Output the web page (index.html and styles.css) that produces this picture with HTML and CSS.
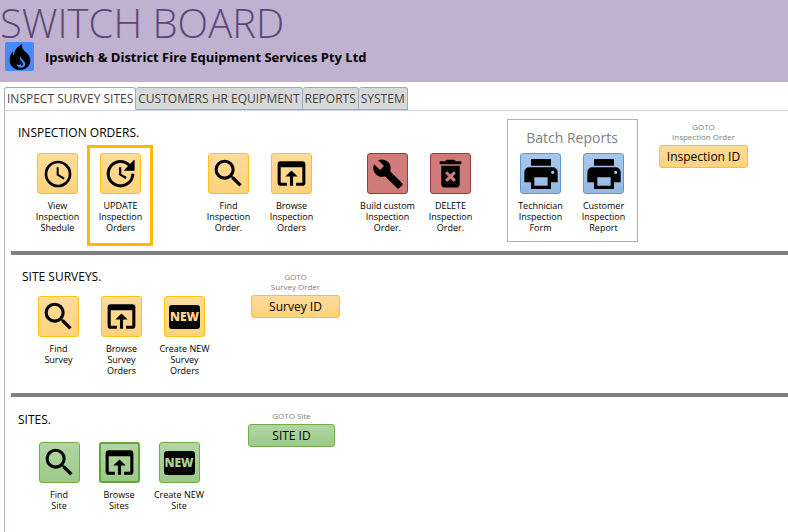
FILE: index.html
```html
<!DOCTYPE html>
<html lang="en">
<head>
<meta charset="utf-8">
<title>Switch Board</title>
<link rel="stylesheet" href="styles.css">
</head>
<body>
<svg class="sprite" aria-hidden="true">
  <symbol id="clock" viewBox="0 0 24 24"><path d="M12 2a10 10 0 1 0 0 20 10 10 0 0 0 0-20zm0 18a8 8 0 1 1 0-16 8 8 0 0 1 0 16zm.5-13H11v6l5.200 3.200.8-1.300-4.500-2.700z"/></symbol>
  <symbol id="update" viewBox="0 0 24 24"><path d="M21 10.120h-6.780l2.740-2.820c-2.730-2.700-7.150-2.800-9.880-.1-2.730 2.710-2.730 7.080 0 9.790s7.150 2.710 9.880 0C18.320 15.650 19 14.080 19 12.100h2c0 1.980-.88 4.550-2.640 6.290-3.510 3.480-9.210 3.480-12.720 0-3.500-3.470-3.530-9.110-.02-12.580s9.140-3.470 12.650 0L21 3v7.120zM12.500 8v4.250l3.500 2.080-.72 1.210L11 13V8h1.500z"/><path d="M21 3v7.120h-6.780z"/></symbol>
  <symbol id="search" viewBox="0 0 24 24"><path d="M15.500 14h-.79l-.28-.27A6.470 6.470 0 0 0 16 9.500 6.500 6.500 0 1 0 9.500 16c1.610 0 3.090-.59 4.230-1.570l.27.28v.79l5 4.990L20.490 19l-4.990-5zm-6 0a4.500 4.500 0 1 1 0-9 4.500 4.500 0 0 1 0 9z"/></symbol>
  <symbol id="browse" viewBox="0 0 24 24"><path d="M19 4H5a2 2 0 0 0-2 2v12a2 2 0 0 0 2 2h4v-2H5V8h14v10h-4v2h4a2 2 0 0 0 2-2V6a2 2 0 0 0-2-2zm-7 6-4 4h3v6h2v-6h3z"/></symbol>
  <symbol id="wrench" viewBox="0 0 24 24"><path d="M22.700 19l-9.100-9.100c.9-2.300.4-5-1.500-6.900-2-2-5-2.400-7.400-1.300L9 6 6 9 1.600 4.700C.4 7.100.9 10.100 2.900 12.100c1.900 1.900 4.600 2.400 6.900 1.500l9.100 9.100c.4.400 1 .4 1.400 0l2.300-2.300c.5-.4.5-1.100.1-1.400z"/></symbol>
  <symbol id="trash" viewBox="0 0 24 24"><path d="M6 19a2 2 0 0 0 2 2h8a2 2 0 0 0 2-2V7H6zm2.460-7.120 1.410-1.410L12 12.590l2.120-2.120 1.410 1.410L13.410 14l2.120 2.120-1.410 1.410L12 15.410l-2.120 2.120-1.410-1.410L10.590 14zM15.500 4l-1-1h-5l-1 1H5v2h14V4z"/></symbol>
  <symbol id="print" viewBox="0 0 24 24"><path d="M19 8H5a3 3 0 0 0-3 3v6h4v4h12v-4h4v-6a3 3 0 0 0-3-3zm-3 11H8v-5h8zm3-7a1 1 0 1 1 0-2 1 1 0 0 1 0 2zm-1-9H6v4h12z"/></symbol>
  <symbol id="flame" viewBox="0 0 78 78"><path d="M46 0C43 11 48 17 56 24c8 7 14 14 14 25 0 17-13 29-31 29S8 66 8 49c0-12 4-20 10-27-1 6 0 10 3 13C22 18 30 8 46 0z"/><path fill="#458bff" d="M41 35c-1 10 13 13 14 24 0 7-6 12-13 12-8 0-13-5-13-12 3 4 7 5 10 3 7-6-5-13 2-27z"/><path d="M41 44c0 7 7 10 7 16 0 4-3 6-7 6 4-7-3-12 0-22z"/></symbol>
</svg>

<header class="banner">
  <h1 class="banner-title">SWITCH BOARD</h1>
  <div class="company">
    <span class="logo"><svg class="logo-icon"><use href="#flame"/></svg></span>
    <p class="company-name">Ipswich &amp; District Fire Equipment Services Pty Ltd</p>
  </div>
</header>

<nav class="tabs" role="tablist">
  <button class="tab active" role="tab" aria-selected="true">INSPECT SURVEY SITES</button>
  <button class="tab" role="tab" aria-selected="false">CUSTOMERS HR EQUIPMENT</button>
  <button class="tab" role="tab" aria-selected="false">REPORTS</button>
  <button class="tab" role="tab" aria-selected="false">SYSTEM</button>
</nav>

<main class="panel">
  <section class="section orders">
    <div class="actions">
      <h2 class="heading">INSPECTION ORDERS.</h2>
      <div class="groups">
        <div class="tiles">
          <div class="tile"><button class="icon-btn amber" id="b1" aria-labelledby="l1"><svg class="icon"><use href="#clock"/></svg></button><label class="caption" id="l1" for="b1">View<br>Inspection<br>Shedule</label></div>
          <div class="tile marked"><button class="icon-btn amber" id="b2" aria-labelledby="l2"><svg class="icon large"><use href="#update"/></svg></button><label class="caption" id="l2" for="b2">UPDATE<br>Inspection<br>Orders</label></div>
        </div>
        <div class="tiles">
          <div class="tile"><button class="icon-btn amber" id="b3" aria-labelledby="l3"><svg class="icon large"><use href="#search"/></svg></button><label class="caption" id="l3" for="b3">Find<br>Inspection<br>Order.</label></div>
          <div class="tile"><button class="icon-btn amber" id="b4" aria-labelledby="l4"><svg class="icon large"><use href="#browse"/></svg></button><label class="caption" id="l4" for="b4">Browse<br>Inspection<br>Orders</label></div>
        </div>
        <div class="tiles edit">
          <div class="tile"><button class="icon-btn red" id="b5" aria-labelledby="l5"><svg class="icon"><use href="#wrench"/></svg></button><label class="caption" id="l5" for="b5">Build custom<br>Inspection<br>Order.</label></div>
          <div class="tile"><button class="icon-btn red" id="b6" aria-labelledby="l6"><svg class="icon large"><use href="#trash"/></svg></button><label class="caption" id="l6" for="b6">DELETE<br>Inspection<br>Order.</label></div>
        </div>
      </div>
    </div>
    <div class="batch">
      <h3 class="batch-title">Batch Reports</h3>
      <div class="tiles">
        <div class="tile"><button class="icon-btn blue" id="b7" aria-labelledby="l7"><svg class="icon huge"><use href="#print"/></svg></button><label class="caption" id="l7" for="b7">Technician<br>Inspection<br>Form</label></div>
        <div class="tile"><button class="icon-btn blue" id="b8" aria-labelledby="l8"><svg class="icon huge"><use href="#print"/></svg></button><label class="caption" id="l8" for="b8">Customer<br>Inspection<br>Report</label></div>
      </div>
    </div>
    <div class="goto">
      <label class="goto-label" for="g1">GOTO<br>Inspection Order</label>
      <button class="goto-btn amber" id="g1">Inspection ID</button>
    </div>
  </section>

  <section class="section surveys">
    <div class="actions">
      <h2 class="heading">SITE SURVEYS.</h2>
      <div class="tiles">
        <div class="tile"><button class="icon-btn amber" id="b9" aria-labelledby="l9"><svg class="icon large"><use href="#search"/></svg></button><label class="caption" id="l9" for="b9">Find<br>Survey</label></div>
        <div class="tile"><button class="icon-btn amber" id="b10" aria-labelledby="l10"><svg class="icon large"><use href="#browse"/></svg></button><label class="caption" id="l10" for="b10">Browse<br>Survey<br>Orders</label></div>
        <div class="tile"><button class="icon-btn amber" id="b11" aria-labelledby="l11"><span class="new">NEW</span></button><label class="caption" id="l11" for="b11">Create NEW<br>Survey<br>Orders</label></div>
      </div>
    </div>
    <div class="goto">
      <label class="goto-label" for="g2">GOTO<br>Survey Order</label>
      <button class="goto-btn amber" id="g2">Survey ID</button>
    </div>
  </section>

  <section class="section sites">
    <div class="actions">
      <h2 class="heading">SITES.</h2>
      <div class="tiles">
        <div class="tile"><button class="icon-btn green" id="b12" aria-labelledby="l12"><svg class="icon large"><use href="#search"/></svg></button><label class="caption" id="l12" for="b12">Find<br>Site</label></div>
        <div class="tile"><button class="icon-btn green selected" id="b13" aria-labelledby="l13"><svg class="icon large"><use href="#browse"/></svg></button><label class="caption" id="l13" for="b13">Browse<br>Sites</label></div>
        <div class="tile"><button class="icon-btn green" id="b14" aria-labelledby="l14"><span class="new">NEW</span></button><label class="caption" id="l14" for="b14">Create NEW<br>Site</label></div>
      </div>
    </div>
    <div class="goto">
      <label class="goto-label" for="g3">GOTO Site</label>
      <button class="goto-btn green" id="g3">SITE ID</button>
    </div>
  </section>
</main>
</body>
</html>
```
FILE: styles.css
```css
* { box-sizing: border-box; }

body {
  margin: 0;
  min-height: 100vh;
  display: flex;
  flex-direction: column;
  background: #fff;
  color: #000;
  font-family: "Open Sans", "Noto Sans", sans-serif;
}

button {
  font-family: inherit;
  padding: 0;
  color: #000;
  cursor: pointer;
}

h1, h2, h3, p { margin: 0; font-weight: 400; }

.sprite { display: none; }

.banner {
  height: 82px;
  background: #bfb1cf;
}

.banner-title {
  height: 42px;
  font-size: 40px;
  line-height: 45px;
  font-weight: 300;
  color: #5e4779;
  white-space: nowrap;
}

.company {
  display: flex;
  align-items: center;
  gap: 11px;
  padding-left: 5px;
}

.logo {
  display: flex;
  width: 29px;
  height: 29px;
  align-items: center;
  justify-content: center;
  border-radius: 2px;
  background: #458bff;
}

.logo-icon { width: 26px; height: 26px; }

.company-name {
  font-size: 13px;
  line-height: 18px;
  font-weight: 700;
}

.tabs {
  display: flex;
  padding: 5px 0 0 4px;
}

.tab {
  height: 23px;
  padding: 0 2px;
  border: 1px solid #9bacc0;
  border-left-width: 0;
  border-radius: 3px 3px 0 0;
  background: #d9d9d9;
  color: #444;
  font-size: 12px;
  white-space: nowrap;
}

.tab.active {
  border-left-width: 1px;
  border-bottom-color: #fff;
  background: #fff;
}

.panel {
  flex: 1;
  margin-left: 4px;
  padding-left: 6px;
  border-top: 1px solid #cdd6e2;
  border-left: 1px solid #a9b8cb;
}

.section {
  display: flex;
  align-items: flex-start;
  border-bottom: 4px solid #7f7f7f;
}

.section:last-child { border-bottom: 0; }

.orders { height: 144px; }
.surveys { height: 142px; }

.actions { padding-top: 13px; }
.sites .actions { padding-top: 14px; }

.heading {
  padding-left: 7px;
  font-size: 12px;
  line-height: 18px;
}

.surveys .heading { padding-left: 11px; }

.groups {
  display: flex;
  gap: 45px;
  padding-left: 15px;
}

.tiles { display: flex; }
.tiles.edit { margin-left: -12px; }

.actions .tiles { padding-top: 11px; }

.surveys .tiles { padding: 10px 0 0 16px; }
.sites .tiles { padding: 13px 0 0 18px; }

.tile {
  position: relative;
  display: flex;
  width: 63px;
  flex-direction: column;
  align-items: center;
  gap: 6px;
}

.sites .tile { width: 60px; }

.marked::after {
  content: "";
  position: absolute;
  inset: -8px -1px -13px -2px;
  border: 3px solid #ffb900;
  pointer-events: none;
}

.icon-btn {
  display: flex;
  width: 41px;
  height: 41px;
  align-items: center;
  justify-content: center;
  border: 1px solid;
  border-radius: 3px;
}

.amber { border: 1px solid #ffc20e; background: linear-gradient(#ffdc9c, #ffd27c); }
.red { border-color: #973c3c; background: #cf7b79; }
.blue { border-color: #5b9bd5; background: linear-gradient(#aac7ea, #94b8e4); }
.green { border: 1px solid #70ad47; background: linear-gradient(#b2d5a4, #9cca87); }
.green.selected { border: 2px solid #62a53a; }

.icon { width: 32px; height: 32px; flex: none; }
.icon.large { width: 37px; height: 37px; }
.icon.huge { width: 40px; height: 40px; }

.new {
  width: 31px;
  border-radius: 3px;
  background: #080808;
  color: #ffd890;
  font-size: 12px;
  line-height: 24px;
  font-weight: 800;
}

.green .new { color: #a8d096; }

.caption {
  font-size: 9px;
  line-height: 11px;
  text-align: center;
  white-space: nowrap;
}

.batch {
  margin: 8px 0 0 25px;
  padding: 8px 2px 0 1px;
  width: 131px;
  height: 123px;
  border: 1px solid #b0b0b0;
}

.batch-title {
  height: 25px;
  font-size: 14px;
  line-height: 20px;
  text-align: center;
  color: #808080;
}

.goto {
  display: flex;
  width: 89px;
  margin: 11px 0 0 21px;
  flex-direction: column;
  gap: 3px;
}

.surveys .goto { margin: 17px 0 0 35px; }
.sites .goto { width: 87px; margin: 14px 0 0 39px; }

.goto-label {
  font-size: 8px;
  line-height: 10px;
  text-align: center;
  white-space: nowrap;
  color: #808080;
}

.goto-btn {
  height: 23px;
  border-radius: 3px;
  font-size: 12px;
}
```
